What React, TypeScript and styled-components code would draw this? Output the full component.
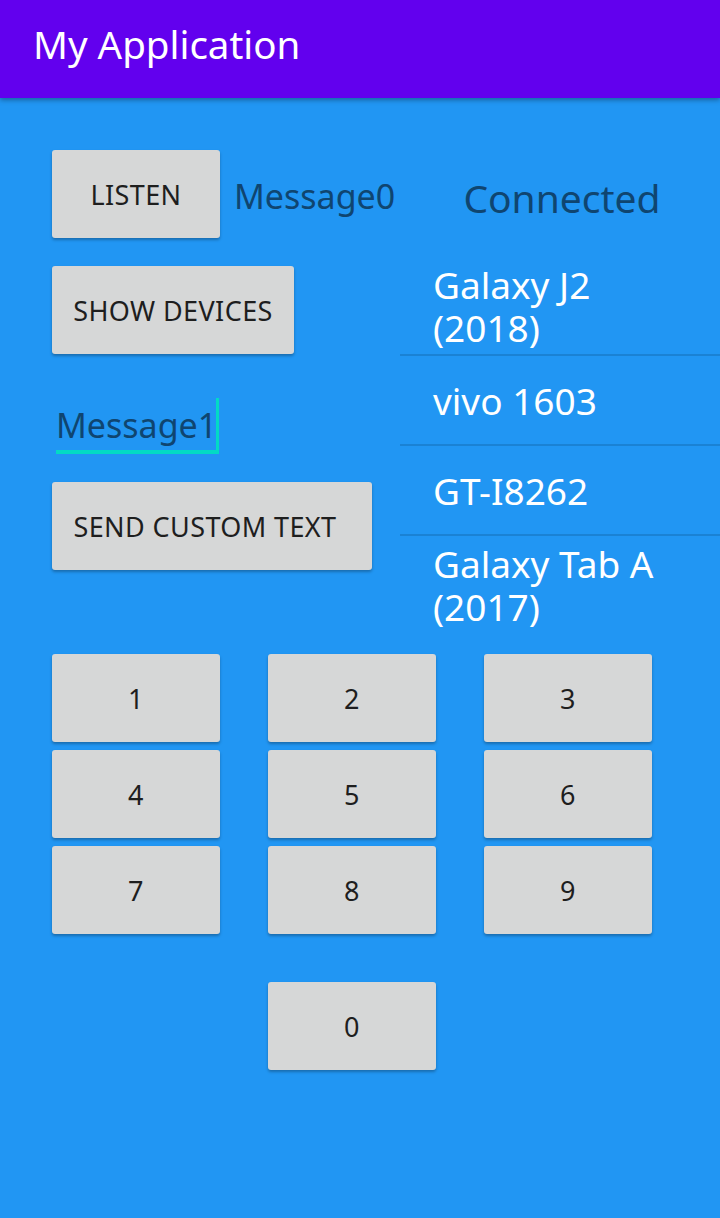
import React from "react";
import styled, { createGlobalStyle } from "styled-components";

const Global = createGlobalStyle`
  html, body { margin: 0; padding: 0; }
  body {
    background: #2196f3;
    font-family: "Noto Sans", "Open Sans", sans-serif;
    width: 720px;
    min-height: 1218px;
  }
`;

const Screen = styled.div`
  width: 720px;
  min-height: 1218px;
  background: #2196f3;
  display: flex;
  flex-direction: column;
`;

const AppBar = styled.header`
  height: 98px;
  background: #6200ee;
  display: flex;
  align-items: center;
  padding-left: 33px;
  box-shadow: 0 2px 5px rgba(0, 0, 0, 0.35);
  position: relative;
  z-index: 1;
  box-sizing: border-box;
`;

const Title = styled.h1`
  margin: 0;
  color: #ffffff;
  font-size: 38.5px;
  font-weight: 400;
  padding-bottom: 10px;
`;

const Content = styled.main`
  padding-top: 52px;
  display: flex;
  flex-direction: column;
`;

const Top = styled.section`
  display: grid;
  grid-template-columns: 348px 320px;
  padding-left: 52px;
`;

const LeftCol = styled.div`
  display: flex;
  flex-direction: column;
  align-items: flex-start;
`;

const Row = styled.div`
  display: flex;
  align-items: center;
  gap: 14px;
`;

const Button = styled.button<{ $w: number; $pr?: number }>`
  width: ${(p) => p.$w}px;
  height: 88px;
  background: #d6d7d7;
  border: none;
  border-radius: 3px;
  box-shadow: 0 2px 3px rgba(0, 0, 0, 0.28);
  color: #1e1e1e;
  font-family: "Noto Sans", sans-serif;
  font-size: 27px;
  letter-spacing: 0.4px;
  text-transform: uppercase;
  padding: 0 ${(p) => p.$pr ?? 0}px 0 0;
  display: flex;
  align-items: center;
  justify-content: center;
  box-sizing: border-box;
`;

const Label = styled.span`
  color: #0f4570;
  font-size: 34px;
  line-height: 44px;
  padding-top: 4px;
`;

const Stacked = styled.div<{ $mt: number }>`
  margin-top: ${(p) => p.$mt}px;
`;

const EditText = styled.div`
  margin-top: 40px;
  margin-left: 4px;
  height: 56px;
  display: flex;
  align-items: flex-end;
  border-bottom: 4px solid #03dac5;
  color: #0f4570;
  font-size: 34px;
  line-height: 50px;
`;

const Cursor = styled.span`
  display: inline-block;
  align-self: flex-end;
  width: 3px;
  height: 52px;
  background: #03dac5;
  margin-left: -1px;
`;

const RightCol = styled.div`
  display: flex;
  flex-direction: column;
  width: 320px;
`;

const Status = styled.div`
  margin-top: 20px;
  height: 56px;
  line-height: 56px;
  text-align: center;
  color: #0f4570;
  font-size: 39px;
  padding-left: 4px;
`;

const DeviceList = styled.ul`
  list-style: none;
  margin: 31px 0 0;
  padding: 0;
`;

const DeviceItem = styled.li`
  min-height: 90px;
  box-sizing: border-box;
  padding: 6px 20px 5px 33px;
  display: flex;
  align-items: center;
  color: #ffffff;
  font-size: 37px;
  line-height: 43px;
  & + & {
    border-top: 2px solid #1a82d4;
  }
`;

const Keypad = styled.section`
  margin-top: 21px;
  padding-left: 52px;
  display: grid;
  grid-template-columns: repeat(3, 168px);
  column-gap: 48px;
  row-gap: 8px;
`;

const ZeroCell = styled.div`
  grid-column: 2;
  margin-top: 40px;
`;

const devices = ["Galaxy J2 (2018)", "vivo 1603", "GT-I8262", "Galaxy Tab A (2017)"];

export default function App() {
  return (
    <Screen>
      <Global />
      <AppBar>
        <Title>My Application</Title>
      </AppBar>
      <Content>
        <Top>
          <LeftCol>
            <Row>
              <Button $w={168}>Listen</Button>
              <Label>Message0</Label>
            </Row>
            <Stacked $mt={28}>
              <Button $w={242}>Show Devices</Button>
            </Stacked>
            <EditText>
              Message1
              <Cursor />
            </EditText>
            <Stacked $mt={28}>
              <Button $w={320} $pr={14}>
                Send Custom Text
              </Button>
            </Stacked>
          </LeftCol>
          <RightCol>
            <Status>Connected</Status>
            <DeviceList>
              {devices.map((d) => (
                <DeviceItem key={d}>{d}</DeviceItem>
              ))}
            </DeviceList>
          </RightCol>
        </Top>
        <Keypad>
          {["1", "2", "3", "4", "5", "6", "7", "8", "9"].map((n) => (
            <Button key={n} $w={168}>
              {n}
            </Button>
          ))}
          <ZeroCell>
            <Button $w={168}>0</Button>
          </ZeroCell>
        </Keypad>
      </Content>
    </Screen>
  );
}
